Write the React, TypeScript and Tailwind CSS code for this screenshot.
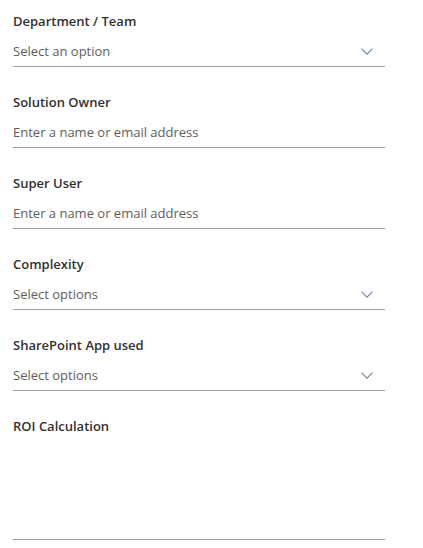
const font = { fontFamily: '"Segoe UI", "Open Sans", "Noto Sans", sans-serif' };

type Field = {
  label: string;
  placeholder: string;
  dropdown?: boolean;
};

const fields: Field[] = [
  { label: "Department / Team", placeholder: "Select an option", dropdown: true },
  { label: "Solution Owner", placeholder: "Enter a name or email address" },
  { label: "Super User", placeholder: "Enter a name or email address" },
  { label: "Complexity", placeholder: "Select options", dropdown: true },
  { label: "SharePoint App used", placeholder: "Select options", dropdown: true },
];

function Chevron() {
  return (
    <svg width="12" height="7" viewBox="0 0 12 7" fill="none" className="mr-[12px]">
      <path d="M0.5 0.7 L6 6.2 L11.5 0.7" stroke="#6584a8" strokeWidth="1.1" />
    </svg>
  );
}

export default function App() {
  return (
    <div className="min-h-screen bg-white pt-[11px] pl-[13px]" style={font}>
      <div className="w-[372px] flex flex-col">
        {fields.map((f) => (
          <div key={f.label} className="mb-[25px]">
            <div className="h-[20px] text-[13px] leading-[20px] font-semibold text-[#323130]">
              {f.label}
            </div>
            <div className="mt-[10px] h-[26px] pb-[5px] border-b border-[#a19f9d] flex items-center justify-between">
              <span className="text-[13px] leading-[20px] text-[#605e5c]">{f.placeholder}</span>
              {f.dropdown && <Chevron />}
            </div>
          </div>
        ))}
        <div>
          <div className="h-[20px] text-[13px] leading-[20px] font-semibold text-[#323130]">
            ROI Calculation
          </div>
          <div className="mt-[10px] h-[94px] border-b border-[#a19f9d]" />
        </div>
      </div>
    </div>
  );
}
